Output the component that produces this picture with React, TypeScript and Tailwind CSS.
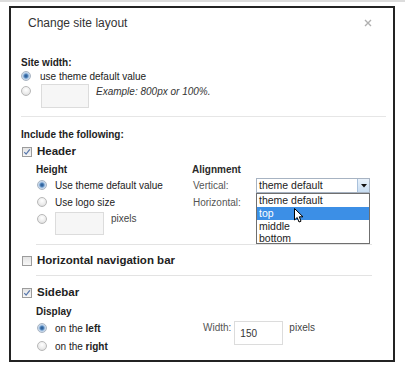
import React from "react";

function Radio({ checked = false }: { checked?: boolean }) {
  return (
    <span
      className={
        checked
          ? "block w-[10px] h-[10px] shrink-0 rounded-full border border-[#a9b4c2] bg-[radial-gradient(circle,#244f86_0%,#4a7fb8_30%,#bcd2ea_55%,#eef1f4_100%)]"
          : "block w-[10px] h-[10px] shrink-0 rounded-full border border-[#b8b8b8] bg-[radial-gradient(circle_at_50%_35%,#ffffff_0%,#ececec_55%,#d4d4d4_100%)]"
      }
    />
  );
}

function Checkbox({ checked = false }: { checked?: boolean }) {
  return (
    <span className="flex items-center justify-center w-[10px] h-[10px] shrink-0 border border-[#9c9c9c] bg-gradient-to-b from-[#e4e4e4] to-[#f7f7f7]">
      {checked && (
        <svg width="8" height="8" viewBox="0 0 8 8">
          <path d="M1.3 4.2 L3.1 6.1 L6.8 1.4" fill="none" stroke="#5575ab" strokeWidth="1.2" />
        </svg>
      )}
    </span>
  );
}

function Rule({ indent = false }: { indent?: boolean }) {
  return <div className={indent ? "ml-[15px] w-[336px] h-px bg-[#e3e3e3]" : "w-full h-px bg-[#e6e6e6]"} />;
}

export default function App() {
  return (
    <div className="w-[405px] h-[369px] bg-white overflow-hidden font-['Liberation_Sans',Arial,sans-serif] text-[#222]">
      <div className="h-[2px] bg-[#dcdcdc]" />

      <div className="mt-[4px] ml-[9px] w-[386px] h-[356px] border-2 border-[#232323] overflow-hidden">
        {/* Title bar */}
        <div className="h-[30px] flex items-center justify-between pl-[17px] pr-[21px]">
          <span className="text-[12px] text-[#333]">Change site layout</span>
          <svg width="8" height="8" viewBox="0 0 8 8">
            <path d="M1 1 L7 7 M7 1 L1 7" stroke="#b0b0b0" strokeWidth="1.4" />
          </svg>
        </div>

        <div className="pl-[10px] pr-[7px] text-[10px]">
          {/* Site width */}
          <div className="mt-[17px] h-[14px] flex items-center font-bold">Site width:</div>
          <div className="h-[14px] flex items-center gap-[9px]">
            <Radio checked />
            <span>use theme default value</span>
          </div>
          <div className="mt-[1px] flex items-start">
            <div className="h-[14px] flex items-center">
              <Radio />
            </div>
            <div className="ml-[10px] w-[48px] h-[24px] border border-[#dcdcdc] bg-[#f6f6f6]" />
            <span className="ml-[7px] mt-[1px] leading-[14px] italic text-[#333]">Example: 800px or 100%.</span>
          </div>

          <div className="mt-[8px]">
            <Rule />
          </div>

          {/* Include */}
          <div className="mt-[10px] h-[14px] flex items-center font-bold">Include the following:</div>
          <div className="mt-[4px] h-[14px] flex items-center gap-[5px] pl-[1px]">
            <Checkbox checked />
            <span className="text-[11.5px] font-bold">Header</span>
          </div>

          <div className="pl-[15px] flex">
            <div className="w-[156px]">
              <div className="mt-[3px] h-[14px] flex items-center font-bold">Height</div>
              <div className="mt-[2px] h-[14px] flex items-center gap-[8px] pl-[1px]">
                <Radio checked />
                <span>Use theme default value</span>
              </div>
              <div className="mt-[3px] h-[14px] flex items-center gap-[8px] pl-[1px]">
                <Radio />
                <span>Use logo size</span>
              </div>
              <div className="mt-[3px] flex items-start pl-[1px]">
                <div className="h-[14px] flex items-center">
                  <Radio />
                </div>
                <div className="ml-[8px] w-[49px] h-[23px] border border-[#dcdcdc] bg-[#f6f6f6]" />
                <span className="ml-[7px] leading-[14px] text-[#444]">pixels</span>
              </div>
            </div>

            <div className="relative flex-1">
              <div className="mt-[3px] h-[14px] flex items-center font-bold text-[#2a2a2a]">Alignment</div>
              <div className="mt-[2px] h-[15px] flex items-center">
                <span className="w-[64px] pl-[1px] text-[#555]">Vertical:</span>
                <div className="w-[114px] h-[15px] flex border border-[#a7b3c2] bg-white">
                  <span className="flex-1 pl-[2px] leading-[13px] text-[10.5px] text-[#222]">theme default</span>
                  <span className="w-[12px] flex items-center justify-center border-l border-[#a9c1dc] bg-gradient-to-b from-[#e9f2fb] to-[#c8ddf2]">
                    <svg width="6" height="4" viewBox="0 0 6 4">
                      <path d="M0 0 L6 0 L3 3.5 Z" fill="#111" />
                    </svg>
                  </span>
                </div>
              </div>
              <div className="mt-[2px] h-[14px] flex items-center">
                <span className="pl-[1px] text-[#555]">Horizontal:</span>
              </div>

              {/* Open dropdown list */}
              <div className="absolute left-[64px] top-[34px] w-[114px] border border-[#6f6f6f] bg-white text-[10.5px] leading-[12px]">
                <div className="pl-[2px] h-[13px]">theme default</div>
                <div className="pl-[2px] h-[13px] bg-[#3c8fe6] text-white">top</div>
                <div className="pl-[2px] h-[12px]">middle</div>
                <div className="pl-[2px] h-[11px]">bottom</div>
                <svg className="absolute left-[37px] top-[14px]" width="10" height="16" viewBox="0 0 10 16">
                  <path d="M0.5 0.5 L0.5 12 L3.2 9.5 L5 14 L7 13.2 L5.3 8.8 L9 8.8 Z" fill="#fff" stroke="#000" strokeWidth="1" strokeLinejoin="round" />
                </svg>
              </div>
            </div>
          </div>

          <div className="mt-[9px]">
            <Rule indent />
          </div>

          {/* Horizontal navigation bar */}
          <div className="mt-[9px] h-[14px] flex items-center gap-[5px] pl-[1px]">
            <Checkbox />
            <span className="text-[11.5px] font-bold">Horizontal navigation bar</span>
          </div>

          <div className="mt-[7px]">
            <Rule indent />
          </div>

          {/* Sidebar */}
          <div className="mt-[10px] h-[14px] flex items-center gap-[5px] pl-[1px]">
            <Checkbox checked />
            <span className="text-[11.5px] font-bold">Sidebar</span>
          </div>
          <div className="pl-[15px]">
            <div className="mt-[4px] h-[14px] flex items-center font-bold">Display</div>
            <div className="mt-[3px] flex">
              <div className="w-[167px] pl-[1px]">
                <div className="h-[14px] flex items-center gap-[8px]">
                  <Radio checked />
                  <span>
                    on the <b>left</b>
                  </span>
                </div>
                <div className="mt-[4px] h-[14px] flex items-center gap-[8px]">
                  <Radio />
                  <span>
                    on the <b>right</b>
                  </span>
                </div>
              </div>
              <div className="flex items-start">
                <span className="leading-[14px] text-[#555]">Width:</span>
                <div className="ml-[3px] w-[49px] h-[24px] flex items-center pl-[5px] border border-[#dcdcdc] bg-white text-[#333]">
                  150
                </div>
                <span className="ml-[6px] leading-[14px] text-[#444]">pixels</span>
              </div>
            </div>
          </div>
        </div>
      </div>
    </div>
  );
}
